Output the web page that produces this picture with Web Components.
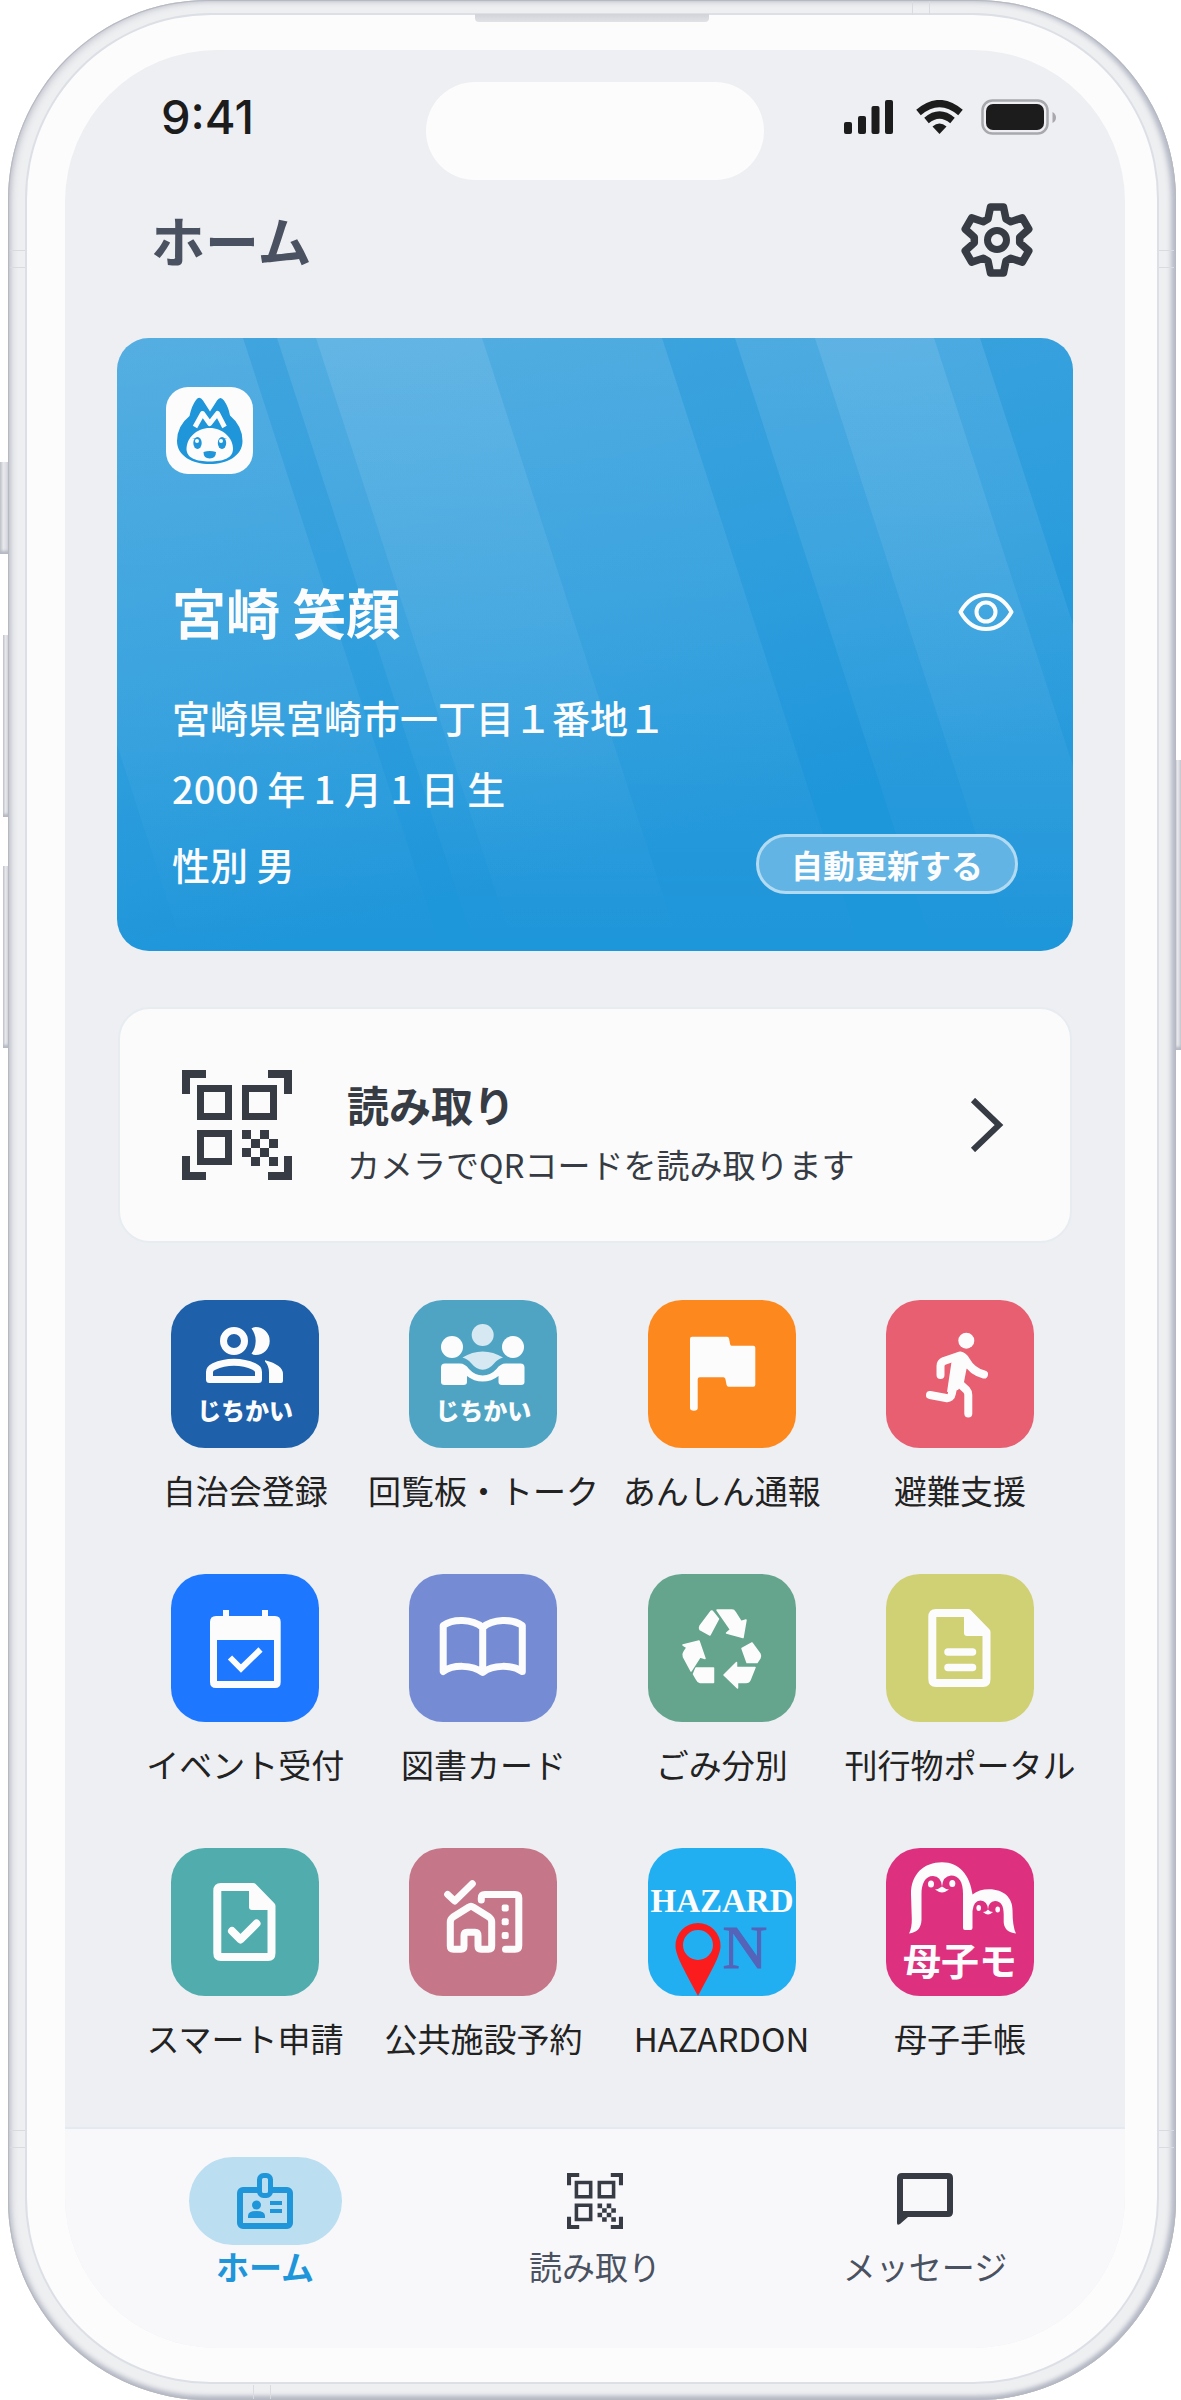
<!DOCTYPE html>
<html lang="ja">
<head>
<meta charset="utf-8">
<meta name="viewport" content="width=device-width, initial-scale=1">
<title>ホーム</title>
<style>
  body {
    margin: 0;
    background: #fff;
    color: #222;
    font-family: 'Noto Sans CJK JP', 'Noto Sans', sans-serif;
    overflow-x: hidden;
  }
</style>
</head>
<body>

<phone-frame>
  <status-bar time="9:41"></status-bar>

  <page-header>ホーム</page-header>

  <id-card>
    <span slot="name">宮崎 笑顔</span>
    <span slot="address">宮崎県宮崎市一丁目１番地１</span>
    <span slot="birthday">2000 年 1 月 1 日 生</span>
    <span slot="gender">性別 男</span>
    <span slot="action">自動更新する</span>
  </id-card>

  <scan-link href="#scan">
    読み取り
    <span slot="hint">カメラでQRコードを読み取ります</span>
  </scan-link>

  <app-grid>
    <app-tile icon="members" color="#1e60aa" caption="じちかい">自治会登録</app-tile>
    <app-tile icon="meeting" color="#4ea4c2" caption="じちかい">回覧板・トーク</app-tile>
    <app-tile icon="flag" color="#fd891e">あんしん通報</app-tile>
    <app-tile icon="runner" color="#e75f70">避難支援</app-tile>
    <app-tile icon="calendar" color="#1e78ff">イベント受付</app-tile>
    <app-tile icon="book" color="#758cd5">図書カード</app-tile>
    <app-tile icon="recycle" color="#65a58d">ごみ分別</app-tile>
    <app-tile icon="document" color="#d0d074">刊行物ポータル</app-tile>
    <app-tile icon="document-check" color="#51adad">スマート申請</app-tile>
    <app-tile icon="house" color="#c67689">公共施設予約</app-tile>
    <app-tile icon="hazardon" color="#22aff2">HAZARDON</app-tile>
    <app-tile icon="boshimo" color="#dd3180">母子手帳</app-tile>
  </app-grid>

  <tab-bar slot="tabs">
    <tab-item icon="badge" href="#home" active>ホーム</tab-item>
    <tab-item icon="scan" href="#scan">読み取り</tab-item>
    <tab-item icon="message" href="#message">メッセージ</tab-item>
  </tab-bar>
</phone-frame>

<script>
  const FOLDED_SHEET = `
    <path fill="none" stroke="currentColor" stroke-width="8" stroke-linejoin="round"
      d="M50 39H82L100.500 58V105Q100.500 109 97 109H50Q46.300 109 46.300 105V43Q46.300 39 50 39Z"/>
    <path fill="currentColor" d="M78 37H84L103 57V62H81Q78 62 78 59Z"/>`;

  const ICONS = {
    signal: ['0 0 50 34', `
      <g fill="currentColor">
        <rect y="22" width="8" height="12" rx="2"/>
        <rect x="14" y="16" width="8" height="18" rx="2"/>
        <rect x="27.500" y="6" width="8" height="28" rx="2"/>
        <rect x="41" width="8" height="34" rx="2"/>
      </g>`],

    wifi: ['0 0 47 34', `
      <g fill="none" stroke="currentColor" stroke-width="7">
        <path d="M2.500 12.500Q23.500 -5.500 44.500 12.500"/>
        <path d="M10.500 20.500Q23.500 9.500 36.500 20.500"/>
      </g>
      <path fill="currentColor" d="M16.500 26.500Q23.500 20.500 30.500 26.500L23.500 34Z"/>`],

    battery: ['0 0 76 37', `
      <rect x="1.500" y="1.500" width="65" height="33" rx="10" fill="none" stroke="#a9a9ad" stroke-width="2.500"/>
      <rect x="5" y="5" width="58" height="26" rx="7" fill="currentColor"/>
      <path d="M71.500 13Q75 15 75 18.500T71.500 24Z" fill="#a9a9ad"/>`],

    gear: ['-37 -37 74 74', `
      <g fill="none" stroke="currentColor" stroke-linejoin="round">
        <circle r="9.500" stroke-width="7"/>
        <path stroke-width="7.500" d="M-9 -21L-6.500 -33H6.500L9 -21L13.700 -18.300L25.300 -22.100L31.800 -10.900L22.700 -2.700V2.700L31.800 10.900L25.300 22.100L13.700 18.300L9 21L6.500 33H-6.500L-9 21L-13.700 18.300L-25.300 22.100L-31.800 10.900L-22.700 2.700V-2.700L-31.800 -10.900L-25.300 -22.100L-13.700 -18.300Z"/>
      </g>`],

    mascot: ['0 0 87 87', `
      <path fill="#1f95da" d="M44 24.500L51 13.500Q54.400 8.500 58 13.500Q62.500 20 64 28.500Q76.500 39 76.500 54C76.500 69 61 77 43.700 77S11 69 11 54Q11 39 23.500 29Q25.500 19 30 13Q33.500 8.500 37 13.500Z"/>
      <path fill="#fcfcfd" d="M43.700 41C57 41 67 51 67 62C67 71 57 74.500 43.700 74.500S20.500 71 20.500 62C20.500 51 30.500 41 43.700 41Z"/>
      <path fill="none" stroke="#fcfcfd" stroke-width="5" stroke-linejoin="round" d="M29 40L36.500 26.500L43.700 36.500L51.500 26.500L58.500 40"/>
      <g fill="#1f95da">
        <ellipse cx="31.500" cy="56" rx="4.200" ry="6"/>
        <ellipse cx="56" cy="56" rx="4.200" ry="6"/>
        <path d="M37.500 65Q43.700 63 50 65Q50 71.500 43.700 71.500T37.500 65Z"/>
        <path d="M26 51.500H31V52.500ZM61.500 51.500H56.500V52.500Z"/>
      </g>
      <g fill="#fcfcfd"><circle cx="31" cy="54" r="2"/><circle cx="55" cy="54" r="2"/></g>`],

    eye: ['0 0 56 40', `
      <g fill="none" stroke="currentColor" stroke-width="4">
        <path stroke-linejoin="round" d="M2.500 20Q12 3 28 3T53.500 20Q44 37 28 37T2.500 20Z"/>
        <circle cx="28" cy="20" r="9.500"/>
      </g>`],

    scan: ['0 0 110 110', `
      <g fill="none" stroke="currentColor">
        <path stroke-width="8" d="M4 24V4H24M86 4H106V24M106 86V106H86M24 106H4V86"/>
        <path stroke-width="7" d="M18.500 18.500H46.500V46.500H18.500ZM63.500 18.500H91.500V46.500H63.500ZM18.500 63.500H46.500V91.500H18.500Z"/>
      </g>
      <path fill="currentColor" d="M60 60h9v9h-9zM78 60h9v9h-9zM69 69h9v9h-9zM87 69h9v9h-9zM60 78h9v9h-9zM78 78h9v9h-9zM69 87h9v9h-9zM87 87h9v9h-9z"/>`],

    chevron: ['0 0 34 54', `
      <path fill="none" stroke="currentColor" stroke-width="6" d="M3 2L29 27L3 52"/>`],

    badge: ['0 0 56 56', `
      <rect x="3" y="17" width="50" height="36" rx="3" fill="none" stroke="currentColor" stroke-width="6"/>
      <rect x="22.500" y="2.500" width="11" height="20" rx="4" fill="#bbdef1" stroke="currentColor" stroke-width="5"/>
      <g fill="currentColor">
        <circle cx="19.500" cy="32" r="4.500"/>
        <path d="M11 45V43Q11 38 19.500 38T28 43V45Z"/>
        <rect x="33" y="28" width="12" height="4"/>
        <rect x="33" y="36" width="12" height="4"/>
      </g>`],

    message: ['0 0 56 56', `
      <path fill="currentColor" fill-rule="evenodd" d="M5 0H51Q56 0 56 5V39Q56 44 51 44H11L3 51Q0 53 0 50V5Q0 0 5 0ZM6 6V38H50V6Z"/>`],

    members: ['0 0 148 148', `
      <circle cx="63" cy="41" r="10.500" fill="none" stroke="currentColor" stroke-width="7"/>
      <path fill="none" stroke="currentColor" stroke-width="7" stroke-linejoin="round" d="M38.500 79.500V72Q38.500 68.500 43 66.500Q52 62.300 63 62.300T83 66.500Q87.500 68.500 87.500 72V79.500Z"/>
      <path fill="currentColor" d="M80.500 28.500Q82 27 84.700 27A14 14 0 0 1 84.700 55Q82 55 80.500 53.500Q84.700 48 84.700 41T80.500 28.500Z"/>
      <path fill="currentColor" d="M94 60.300Q112 65 112 74V81Q112 83 110 83H98V72Q98 66 94 61.500Z"/>`],

    meeting: ['0 0 148 148', `
      <g fill="#d6e9f3">
        <circle cx="73.700" cy="35" r="11"/>
        <path d="M53.500 57.500Q63 51.500 73.700 51.500T94 57.500Q88.500 59 85.500 63Q80 69.700 73.700 69.700T62 63Q59 59 53.500 57.500Z"/>
      </g>
      <g fill="currentColor">
        <circle cx="43" cy="47" r="11"/>
        <circle cx="104" cy="47" r="11"/>
        <path d="M36 63.500H51Q56 63.500 60 69Q66 75.500 73.700 75.500T87.500 69Q91.500 63.500 96.500 63.500H111.500Q115.500 63.500 115.500 67.500V82Q115.500 85 112 85H93Q89.500 85 89.500 82V76Q82.500 81.500 73.700 81.500T58 76V82Q58 85 54.500 85H35.500Q32 85 32 82V67.500Q32 63.500 36 63.500Z"/>
      </g>`],

    flag: ['0 0 148 148', `
      <path fill="currentColor" d="M44 36.700H79Q80.600 36.700 81 38.400L82.200 44.400Q82.600 45.700 84 45.700H105.300Q107.300 45.700 107.300 47.700V84.700Q107.300 86.700 105.300 86.700H80.600Q79 86.700 78.600 85L77.400 79Q77 77.300 75.400 77.300H51.700Q49.700 77.300 49.700 79.300V108Q49.700 110.700 45.900 110.700T42 108V38.700Q42 36.700 44 36.700Z"/>`],

    runner: ['0 0 148 148', `
      <circle cx="80.300" cy="40.700" r="8" fill="currentColor"/>
      <path fill="currentColor" d="M68 54L78 53L84 64L80.500 69L78 82L72 90L61 92L65.500 62Z"/>
      <g fill="none" stroke="currentColor" stroke-width="8" stroke-linecap="round" stroke-linejoin="round">
        <path d="M54.500 75V66Q54.500 62.500 58 61L74 55.500Q77.500 56 80 60.500Q86 71.500 98 74.500"/>
        <path d="M72.500 59L66 93Q65 99 60 98L44 95"/>
        <path d="M73 83L80.500 90Q82.300 92 82.300 95V113.500"/>
      </g>`],

    calendar: ['0 0 148 148', `
      <path fill="currentColor" fill-rule="evenodd" d="M52 36H58V42H91V36H97V42H104Q109.700 42 109.700 48V108Q109.700 114 104 114H45Q39 114 39 108V48Q39 42 45 42H52ZM46 66V107H103V66Z"/>
      <path fill="none" stroke="currentColor" stroke-width="6" d="M59 83.500L70 94.500L89.500 75.500"/>`],

    book: ['0 0 148 148', `
      <path fill="none" stroke="currentColor" stroke-width="7" stroke-linejoin="round" d="M34.200 97.500V51.500C44 44.500 63 44.500 73.700 53.500C84 44.500 103.500 44.500 113.300 51.500V97.500C103 90.500 84 90.500 73.700 98.500C63 90.500 44 90.500 34.200 97.500ZM73.700 53.500V98"/>`],

    recycle: ['0 0 148 148', `
      <path fill="currentColor" stroke="currentColor" stroke-width="1.500" stroke-linejoin="round"
        d="M62.500 38Q63.700 36 65 38L70.500 45L62 61L52 55.500Q51 54 52 52ZM69 36H84Q86 36 87 38L93 47.500L98 46L95 63.500L78.500 59L82.500 55.500Z
        M35 71L51 67L57 84.500L52 83L43 97L35.500 83Q34.500 80 36 78L39 73.500ZM48 94H65.500V108.500H52Q50 108.500 49 106L45.500 100ZM76 101L88.500 88.500V93.500H107L102 106Q101 108.500 98 108.500H89.500V114ZM94 74.500L104 69L112 80Q113 82 112 84L109 88.500H99Z"/>`],

    document: ['0 0 148 148', FOLDED_SHEET + `
      <path stroke="currentColor" stroke-width="7.500" stroke-linecap="round" d="M62 78H86.500M62 93.500H86.500"/>`],

    'document-check': ['0 0 148 148', FOLDED_SHEET + `
      <path fill="none" stroke="currentColor" stroke-width="8" stroke-linecap="round" stroke-linejoin="round" d="M61 83L69.500 91.500L85.500 75.500"/>`],

    house: ['0 0 148 148', `
      <g fill="none" stroke="currentColor" stroke-width="7" stroke-linecap="round" stroke-linejoin="round">
        <path d="M38.700 46.500L45.700 53L63.300 35.700"/>
        <path d="M41.300 98V74Q41.300 71 44 69L60 59Q62 57.500 64 59L80 69Q82.700 71 82.700 74V98Q82.700 101.300 79.500 101.300H72Q69 101.300 69 98V88Q69 84.300 66 84.300H58Q55 84.300 55 88V98Q55 101.300 52 101.300H44.500Q41.300 101.300 41.300 98Z"/>
        <path d="M72.300 52V50Q72.300 46.500 76 46.500H106Q109.800 46.500 109.800 50V97.500Q109.800 101.300 106 101.300H96.500"/>
      </g>
      <g fill="currentColor">
        <rect x="92.700" y="56.500" width="7" height="7" rx="2"/>
        <rect x="92.700" y="70.300" width="7" height="7" rx="2"/>
        <rect x="92.700" y="84" width="7" height="7" rx="2"/>
      </g>`],

    hazardon: ['0 0 148 148', `
      <g font-family="'Liberation Serif', serif" text-anchor="middle">
        <text x="74" y="64" font-size="33" font-weight="700" fill="#fcfcfd">HAZARD</text>
        <text x="97" y="120" font-size="62" fill="#5563b8" stroke="#5563b8">N</text>
      </g>
      <path fill="#fb1d1d" fill-rule="evenodd" d="M50 75A22.500 22.500 0 0 1 72.500 98C72.500 108 62 125 50 148C38 125 27.500 108 27.500 98A22.500 22.500 0 0 1 50 75ZM50 82A15 15 0 1 0 50 112A15 15 0 1 0 50 82Z"/>`],

    boshimo: ['0 0 148 148', `
      <g transform="translate(-1 0)">
        <path fill="currentColor" fill-rule="evenodd" d="M24 85.500Q27 80 26.800 71L26 46C26 26 39 14.300 57 14.300C74 14.300 85 27 87.500 46.500Q94 41.300 104 41.300C119 41.300 127.500 50 127.500 62Q127.500 79 131 85.500Q119 84 118.700 74V66C118.700 58 116 53 110 53Q103.500 53.500 103 61.500Q102.500 53 95.500 52.500Q88.500 52.500 87.500 63V80Q87.500 82 85.500 82H80Q78 82 78 80V46C78 34 74 27.500 66 27.500Q58 28 57 38.500Q56 28 48 28C40 28 36.500 36 36.500 46V72Q36 84 24 85.500Z"/>
        <g fill="currentColor">
          <ellipse cx="46" cy="36" rx="3" ry="3.500"/>
          <ellipse cx="67.300" cy="35.500" rx="3" ry="3.500"/>
          <path d="M50 41.500Q54 41 57 38.500Q60 41 64 41.500Q60 44.500 57 44.500T50 41.500Z"/>
          <ellipse cx="93.700" cy="60" rx="2.300" ry="3"/>
          <ellipse cx="112.700" cy="61.500" rx="2.300" ry="3"/>
          <path d="M98 64Q101 64 103 61.500Q105 64 108 64Q105 66.500 103 66.500T98 64Z"/>
        </g>
        <text x="75" y="127" font-size="38" font-weight="700" text-anchor="middle" fill="currentColor">母子モ</text>
      </g>`]
  };

  // <ui-icon name="gear"> - size it from outside with width / height
  class UiIcon extends HTMLElement {
    connectedCallback() {
      if (this.shadowRoot) return;
      const [viewBox, body] = ICONS[this.getAttribute('name')];
      this.attachShadow({ mode: 'open' }).innerHTML = `
        <style>
          :host { display: block; flex: none; }
          svg { display: block; width: 100%; height: 100%; }
        </style>
        <svg viewBox="${viewBox}" aria-hidden="true">${body}</svg>`;
    }
  }

  class PhoneFrame extends HTMLElement {
    constructor() {
      super();
      this.attachShadow({ mode: 'open' }).innerHTML = `
        <style>
          :host {
            display: block;
            position: relative;
            margin: 0 5px 0 8px;
          }

          .wall {
            position: relative;
            padding: 15px 19px 18px;
            border-radius: 200px;
            background: #eeeff1;
            box-shadow:
              inset 0 0 0 1px #b7b9c0,
              inset 0 -4px 5px #b4b8c4,
              inset -5px 0 5px #b9bdc9,
              inset 3px 1px 7px #c3c5cf;
          }

          .bezel {
            padding: 35px 32px 34px 38px;
            border-radius: 184px;
            background: #fcfcfc;
            box-shadow: 0 0 0 2px #dcdfe5;
          }

          .screen {
            display: flex;
            flex-direction: column;
            border-radius: 152px;
            overflow: hidden;
            background: #eeeff3;
          }

          /* hardware details sit on top of the wall */
          .key, .seam, .speaker { position: absolute; }

          .key {
            left: -5px;
            width: 6px;
            height: 182px;
            background: linear-gradient(90deg, #c9cad0, #e8e9ed 40%, #d0d2da);
            box-shadow: inset 0 -3px 3px #b5b8c2;
          }
          .key.action { left: -8px; width: 9px; top: 462px; height: 92px; }
          .key.up { top: 635px; }
          .key.down { top: 866px; }
          .key.power { left: auto; right: -5px; top: 760px; height: 290px; }

          .speaker {
            top: 14px;
            left: 40%;
            right: 40%;
            height: 8px;
            border-radius: 0 0 4px 4px;
            background: linear-gradient(#d2d3d9, #e1e2e6);
          }

          .seam { border: 0 solid #d9dbe1; }
          .seam.side { width: 15px; height: 16px; border-width: 1px 0; }
          .seam.edge { width: 16px; height: 14px; border-width: 0 1px; }
          .left { left: 2px; }
          .right { right: 2px; }
          .high { top: 250px; }
          .low { bottom: 252px; }
          .over { top: 1px; right: 246px; }
          .under { bottom: 1px; left: 245px; }
        </style>

        <div class="key action"></div>
        <div class="key up"></div>
        <div class="key down"></div>
        <div class="key power"></div>
        <div class="wall">
          <div class="bezel">
            <div class="screen">
              <slot></slot>
              <slot name="tabs"></slot>
            </div>
          </div>
          <div class="speaker"></div>
          <div class="seam side left high"></div>
          <div class="seam side left low"></div>
          <div class="seam side right high"></div>
          <div class="seam side right low"></div>
          <div class="seam edge over"></div>
          <div class="seam edge under"></div>
        </div>`;
    }
  }

  class StatusBar extends HTMLElement {
    connectedCallback() {
      this.attachShadow({ mode: 'open' }).innerHTML = `
        <style>
          :host {
            display: grid;
            grid-template-columns: 1fr 338px 1fr;
            padding: 32px 68px 20px;
            color: #1c1c1c;
          }
          time {
            margin-left: 28px;
            font: 500 47px/70px Inter, sans-serif;
          }
          .island {
            height: 98px;
            border-radius: 49px;
            background: #fcfcfc;
          }
          .icons {
            display: flex;
            justify-content: flex-end;
            align-items: center;
            height: 70px;
          }
          .signal { width: 50px; height: 34px; }
          .wifi { width: 47px; height: 34px; margin: 0 18px 0 22px; }
          .battery { width: 76px; height: 37px; }
        </style>
        <time>${this.getAttribute('time')}</time>
        <div class="island"></div>
        <div class="icons">
          <ui-icon class="signal" name="signal"></ui-icon>
          <ui-icon class="wifi" name="wifi"></ui-icon>
          <ui-icon class="battery" name="battery"></ui-icon>
        </div>`;
    }
  }

  class PageHeader extends HTMLElement {
    constructor() {
      super();
      this.attachShadow({ mode: 'open' }).innerHTML = `
        <style>
          :host {
            display: flex;
            justify-content: space-between;
            align-items: center;
            height: 80px;
            padding: 0 91px 0 86px;
          }
          h1 {
            margin: 0;
            font-size: 54px;
            line-height: 78px;
            font-weight: 700;
            color: #4a5160;
          }
          button {
            padding: 0;
            border: 0;
            background: none;
            color: #363b44;
          }
          ui-icon { width: 74px; height: 74px; }
        </style>
        <h1><slot></slot></h1>
        <button type="button" aria-label="設定"><ui-icon name="gear"></ui-icon></button>`;
    }
  }

  class IdCard extends HTMLElement {
    constructor() {
      super();
      this.attachShadow({ mode: 'open' }).innerHTML = `
        <style>
          :host {
            display: block;
            position: relative;
            box-sizing: border-box;
            margin: 58px 52px 0;
            padding: 49px 55px 57px;
            border-radius: 32px;
            overflow: hidden;
            color: #fcfcfd;
            background: linear-gradient(165deg, #42a5de, #2f9edd 45%, #1e96da 75%);
          }

          /* slanted light beams behind the text */
          .beams {
            position: absolute;
            inset: 0;
            width: 100%;
            height: 100%;
          }

          .content { position: relative; }

          .logo {
            width: 87px;
            height: 87px;
            margin-left: -6px;
            border-radius: 22px;
            background: #fcfcfd;
          }

          .row {
            display: flex;
            justify-content: space-between;
            align-items: center;
          }

          h2 {
            margin: 0;
            font-size: 54px;
            line-height: 80px;
            font-weight: 700;
          }

          .name { margin-top: 98px; }

          p {
            margin: 0;
            font-size: 38px;
            line-height: 60px;
            font-weight: 500;
          }
          .address { margin-top: 35px; }
          .birthday { margin-top: 11px; }
          .last { margin-top: 16px; }

          button {
            padding: 0;
            border: 0;
            background: none;
            font: inherit;
            color: inherit;
          }
          .eye { margin-right: 4px; }
          .eye ui-icon { width: 56px; height: 40px; }

          .pill {
            width: 262px;
            height: 60px;
            border: 3px solid #b2dbf2;
            border-radius: 30px;
            background: #62b4e4;
            font-size: 32px;
            line-height: 52px;
            font-weight: 700;
          }
        </style>

        <svg class="beams" viewBox="0 0 956 613" preserveAspectRatio="none" aria-hidden="true">
          <defs>
            <linearGradient id="beam" gradientUnits="userSpaceOnUse" x1="0" y1="0" x2="0" y2="613">
              <stop offset="0" stop-color="#fff" stop-opacity=".1"/>
              <stop offset=".6" stop-color="#fff" stop-opacity=".05"/>
              <stop offset="1" stop-color="#fff" stop-opacity="0"/>
            </linearGradient>
          </defs>
          <g fill="url(#beam)">
            <path d="M-132 0H126L325 613H67Z"/>
            <path d="M160 0H545L744 613H359Z"/>
            <path d="M199 0H365L564 613H398Z"/>
            <path d="M618 0H863L1062 613H817Z"/>
            <path d="M698 0H817L1016 613H897Z"/>
          </g>
        </svg>

        <div class="content">
          <ui-icon class="logo" name="mascot"></ui-icon>
          <div class="row name">
            <h2><slot name="name"></slot></h2>
            <button class="eye" type="button" aria-label="表示"><ui-icon name="eye"></ui-icon></button>
          </div>
          <p class="address"><slot name="address"></slot></p>
          <p class="birthday"><slot name="birthday"></slot></p>
          <div class="row last">
            <p><slot name="gender"></slot></p>
            <button class="pill" type="button"><slot name="action"></slot></button>
          </div>
        </div>`;
    }
  }

  class ScanLink extends HTMLElement {
    connectedCallback() {
      this.attachShadow({ mode: 'open' }).innerHTML = `
        <style>
          :host {
            display: block;
            margin: 56px 53px 0;
          }
          a {
            display: flex;
            align-items: center;
            gap: 55px;
            padding: 52px 66px 52px 62px;
            border: 2px solid #e7ecf1;
            border-radius: 32px;
            background: #fbfbfb;
            color: #363b44;
            text-decoration: none;
          }
          .text {
            flex: 1;
            padding-top: 12px;
          }
          strong, small { display: block; }
          strong {
            font-size: 42px;
            line-height: 62px;
            font-weight: 700;
          }
          small {
            margin-top: 4px;
            font-size: 33px;
            line-height: 50px;
          }
          .scan { width: 110px; height: 110px; }
          .chevron { width: 34px; height: 54px; }
        </style>
        <a href="${this.getAttribute('href')}">
          <ui-icon class="scan" name="scan"></ui-icon>
          <span class="text">
            <strong><slot></slot></strong>
            <small><slot name="hint"></slot></small>
          </span>
          <ui-icon class="chevron" name="chevron"></ui-icon>
        </a>`;
    }
  }

  class AppGrid extends HTMLElement {
    constructor() {
      super();
      this.attachShadow({ mode: 'open' }).innerHTML = `
        <style>
          :host {
            display: grid;
            grid-template-columns: repeat(4, 1fr);
            row-gap: 60px;
            margin: 57px 46px 65px 61px;
          }
        </style>
        <slot></slot>`;
    }
  }

  class AppTile extends HTMLElement {
    connectedCallback() {
      const icon = this.getAttribute('icon');
      const caption = this.getAttribute('caption');

      this.attachShadow({ mode: 'open' }).innerHTML = `
        <style>
          :host { display: block; }
          a {
            display: flex;
            flex-direction: column;
            align-items: center;
            gap: 18px;
            color: #222;
            text-decoration: none;
            white-space: nowrap;
            font-size: 33px;
            line-height: 48px;
          }
          .tile {
            display: grid;
            width: 148px;
            height: 148px;
            border-radius: 34px;
            background: ${this.getAttribute('color')};
            color: #fcfcfd;
          }
          .tile > * { grid-area: 1 / 1; }
          .tile b {
            align-self: end;
            padding-bottom: 20px;
            text-align: center;
            font-size: 24px;
            line-height: 36px;
            font-weight: 900;
          }
        </style>
        <a href="#${icon}">
          <span class="tile">
            <ui-icon name="${icon}"></ui-icon>
            ${caption ? `<b>${caption}</b>` : ''}
          </span>
          <slot></slot>
        </a>`;
    }
  }

  class TabBar extends HTMLElement {
    constructor() {
      super();
      this.attachShadow({ mode: 'open' }).innerHTML = `
        <style>
          nav {
            display: grid;
            grid-template-columns: repeat(3, 1fr);
            padding: 28px 35px 61px;
            border-top: 2px solid #e4eaf1;
            background: #f8f8fb;
          }
        </style>
        <nav><slot></slot></nav>`;
    }
  }

  class TabItem extends HTMLElement {
    connectedCallback() {
      this.attachShadow({ mode: 'open' }).innerHTML = `
        <style>
          a {
            display: flex;
            flex-direction: column;
            align-items: center;
            color: #4a5160;
            text-decoration: none;
            font-size: 33px;
            line-height: 42px;
          }
          .pill {
            display: grid;
            place-items: center;
            width: 153px;
            height: 88px;
            border-radius: 44px;
            color: #363b44;
          }
          ui-icon { width: 56px; height: 56px; }
          :host([active]) a { color: #1f95da; font-weight: 700; }
          :host([active]) .pill { background: #bbdef1; color: #1f95da; }
        </style>
        <a href="${this.getAttribute('href')}">
          <span class="pill"><ui-icon name="${this.getAttribute('icon')}"></ui-icon></span>
          <slot></slot>
        </a>`;
    }
  }

  customElements.define('ui-icon', UiIcon);
  customElements.define('phone-frame', PhoneFrame);
  customElements.define('status-bar', StatusBar);
  customElements.define('page-header', PageHeader);
  customElements.define('id-card', IdCard);
  customElements.define('scan-link', ScanLink);
  customElements.define('app-grid', AppGrid);
  customElements.define('app-tile', AppTile);
  customElements.define('tab-bar', TabBar);
  customElements.define('tab-item', TabItem);
</script>
</body>
</html>
